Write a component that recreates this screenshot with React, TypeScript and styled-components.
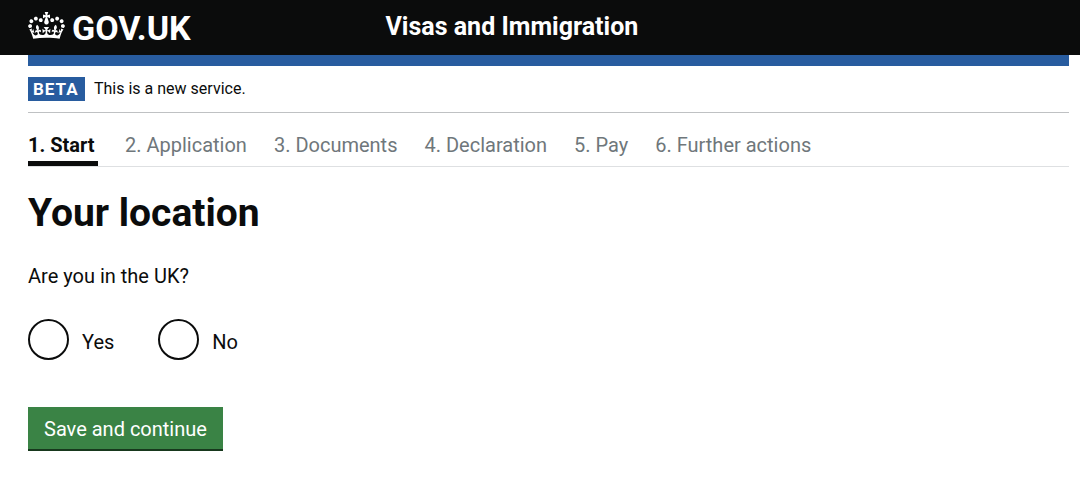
import React from "react";
import styled, { createGlobalStyle } from "styled-components";

const GlobalStyle = createGlobalStyle`
  *, *::before, *::after { box-sizing: border-box; }
  body {
    margin: 0;
    background: #fff;
    color: #0b0c0c;
    font-family: Roboto, "Noto Sans", sans-serif;
    font-size: 20px;
    line-height: 24px;
  }
`;

const Header = styled.header`
  display: flex;
  align-items: center;
  height: 55px;
  padding: 0 11px 0 28px;
  background: #0b0c0c;
  color: #fff;
`;

const LogoColumn = styled.div`
  flex: 0 0 33%;
`;

const LogoLink = styled.a`
  display: inline-flex;
  align-items: center;
  gap: 7px;
  color: inherit;
  font-size: 34px;
  font-weight: 700;
  line-height: 40px;
  text-decoration: none;
`;

const Crown = styled.svg`
  display: block;
  width: 37px;
  height: 27px;
  margin-bottom: 4px;
  fill: currentColor;
`;

const ServiceName = styled.a`
  margin-left: 14px;
  padding-bottom: 2px;
  color: inherit;
  font-size: 25px;
  font-weight: 700;
  line-height: 32px;
  text-decoration: none;
`;

const Page = styled.div`
  margin: 0 11px 0 28px;
`;

const BlueBar = styled.div`
  height: 11px;
  background: #285c9f;
`;

const PhaseBanner = styled.div`
  display: flex;
  align-items: center;
  gap: 9px;
  height: 47px;
  border-bottom: 1px solid #bfc1c3;
  font-size: 16px;
`;

const PhaseTag = styled.strong`
  min-width: 57px;
  padding: 0 5px;
  background: #285c9f;
  color: #fff;
  font-size: 17px;
  font-weight: 700;
  letter-spacing: 1px;
`;

const Steps = styled.ol`
  display: flex;
  gap: 27px;
  margin: 0;
  padding: 20px 0 0;
  border-bottom: 1px solid #dee0e2;
  list-style: none;
`;

const Step = styled.li<{ $current?: boolean }>`
  min-width: ${(p) => (p.$current ? "70px" : "0")};
  padding-bottom: 4px;
  border-bottom: 5px solid ${(p) => (p.$current ? "#0b0c0c" : "transparent")};
  color: ${(p) => (p.$current ? "#0b0c0c" : "#6f777b")};
  font-weight: ${(p) => (p.$current ? 700 : 400)};
`;

const Title = styled.h1`
  margin: 23px 0 0;
  font-size: 39px;
  font-weight: 700;
  line-height: 46px;
`;

const Question = styled.fieldset`
  margin: 28px 0 0;
  padding: 0;
  border: 0;
`;

const Legend = styled.legend`
  padding: 0;
`;

const Options = styled.div`
  display: flex;
  gap: 44px;
  margin-top: 31px;
`;

const Option = styled.label`
  display: flex;
  align-items: center;
  gap: 13px;
  cursor: pointer;
`;

const OptionText = styled.span`
  padding-top: 5px;
`;

const Radio = styled.input`
  width: 41px;
  height: 41px;
  margin: 0;
  appearance: none;
  border: 2px solid #0b0c0c;
  border-radius: 50%;
  background: #fff;

  &:checked {
    background: radial-gradient(#0b0c0c 0 10px, #fff 11px);
  }
`;

const SaveButton = styled.button`
  margin: 47px 0 0;
  padding: 10px 16px 8px;
  border: 0;
  border-bottom: 2px solid #17381d;
  background: #3a8345;
  color: #fff;
  font: inherit;
  cursor: pointer;
`;

const steps = [
  "1. Start",
  "2. Application",
  "3. Documents",
  "4. Declaration",
  "5. Pay",
  "6. Further actions",
];

export default function App() {
  return (
    <>
      <GlobalStyle />
      <Header>
        <LogoColumn>
          <LogoLink href="#">
            <Crown viewBox="0 0 132 97" aria-hidden="true">
              <path d="M25 30.2c3.5 1.5 7.7-.2 9.1-3.7 1.5-3.6-.2-7.8-3.9-9.2-3.6-1.4-7.6.3-9.1 3.9-1.4 3.5.3 7.5 3.9 9zM9 39.5c3.6 1.5 7.8-.2 9.2-3.7 1.5-3.6-.2-7.8-3.9-9.1-3.6-1.5-7.6.2-9.1 3.8-1.4 3.5.3 7.5 3.8 9zM4.4 57.2c3.5 1.5 7.7-.2 9.1-3.8 1.5-3.6-.2-7.7-3.9-9.1-3.5-1.5-7.6.3-9.1 3.8-1.4 3.5.3 7.6 3.9 9.1zm38.3-21.4c3.5 1.5 7.7-.2 9.1-3.8 1.5-3.6-.2-7.7-3.9-9.1-3.6-1.5-7.6.3-9.1 3.8-1.3 3.6.4 7.7 3.9 9.1zm64.4-5.6c-3.6 1.5-7.8-.2-9.1-3.7-1.5-3.6.2-7.8 3.8-9.2 3.6-1.4 7.7.3 9.2 3.9 1.3 3.5-.4 7.5-3.9 9zm15.9 9.3c-3.6 1.5-7.7-.2-9.1-3.7-1.5-3.6.2-7.8 3.7-9.1 3.6-1.5 7.7.2 9.2 3.8 1.5 3.5-.3 7.5-3.8 9zm4.7 17.7c-3.6 1.5-7.8-.2-9.2-3.8-1.5-3.6.2-7.7 3.9-9.1 3.6-1.5 7.7.3 9.2 3.8 1.3 3.5-.4 7.6-3.9 9.1zM89.3 35.8c-3.6 1.5-7.8-.2-9.2-3.8-1.4-3.6.2-7.7 3.9-9.1 3.6-1.5 7.7.3 9.2 3.8 1.4 3.6-.3 7.7-3.9 9.1zM69.7 17.7l8.9 4.7V9.3l-8.9 2.8c-.2-.3-.5-.6-.9-.9L72.4 0H59.6l3.5 11.2c-.3.3-.6.5-.9.9l-8.8-2.8v13.1l8.8-4.7c.3.3.6.7.9.9l-5 15.4v.1c-.2.8-.4 1.6-.4 2.4 0 4.1 3.1 7.5 7 8.1h.2c.3 0 .7.1 1 .1.4 0 .7 0 1-.1h.2c4-.6 7.1-4.1 7.1-8.1 0-.8-.1-1.7-.4-2.4V34l-5.1-15.4c.4-.2.7-.6 1-.9zM66 92.8c16.9 0 32.8 1.1 47.1 3.2 4-16.9 8.9-26.7 14-33.5l-9.6-3.4c1 4.9 1.1 7.2 0 10.2-1.5-1.4-3-4.3-4.2-8.7L108.6 76c2.8-2 5-3.2 7.5-3.3-4.4 9.4-10 11.9-13.6 11.2-4.3-.8-6.3-4.6-5.6-7.9 1-4.7 5.7-5.9 8-.5 4.3-8.7-3-11.4-7.6-8.8 7.1-7.2 7.9-13.5 2.1-21.1-8 6.1-8.1 12.3-4.5 20.8-4.7-5.4-12.1-2.5-9.5 6.2 3.4-5.2 7.9-2 7.2 3.1-.6 4.3-6.4 7.8-13.5 7.2-10.3-.9-10.9-8-11.2-13.8 2.5-.5 7.1 1.8 11 7.3L80.2 60c-4.1 4.4-8 5.3-12.3 5.4 1.4-4.4 8-11.6 8-11.6H55.5s6.4 7.2 7.9 11.6c-4.2-.1-8-1-12.3-5.4l1.4 16.4c3.9-5.5 8.5-7.7 10.9-7.3-.3 5.8-.9 12.8-11.1 13.8-7.2.6-12.9-2.9-13.5-7.2-.7-5 3.8-8.3 7.1-3.1 2.7-8.7-4.6-11.6-9.4-6.2 3.7-8.5 3.6-14.7-4.6-20.8-5.8 7.6-5 13.9 2.2 21.1-4.7-2.6-11.9.1-7.7 8.8 2.3-5.5 7.1-4.2 8.1.5.7 3.3-1.3 7.1-5.7 7.9-3.5.7-9-1.8-13.5-11.2 2.5.1 4.7 1.3 7.5 3.3l-4.7-15.4c-1.2 4.4-2.7 7.2-4.3 8.7-1.1-3-.9-5.3 0-10.2l-9.5 3.4c5 6.9 9.9 16.7 14 33.5 14.8-2.1 30.8-3.2 47.7-3.2z" />
            </Crown>
            GOV.UK
          </LogoLink>
        </LogoColumn>
        <ServiceName href="#">Visas and Immigration</ServiceName>
      </Header>
      <Page>
        <BlueBar />
        <PhaseBanner>
          <PhaseTag>BETA</PhaseTag>
          <span>This is a new service.</span>
        </PhaseBanner>
        <Steps>
          {steps.map((step, i) => (
            <Step key={step} $current={i === 0} aria-current={i === 0 ? "step" : undefined}>
              {step}
            </Step>
          ))}
        </Steps>
        <main>
          <Title>Your location</Title>
          <form onSubmit={(e) => e.preventDefault()}>
            <Question>
              <Legend>Are you in the UK?</Legend>
              <Options>
                <Option>
                  <Radio type="radio" name="inUk" value="yes" />
                  <OptionText>Yes</OptionText>
                </Option>
                <Option>
                  <Radio type="radio" name="inUk" value="no" />
                  <OptionText>No</OptionText>
                </Option>
              </Options>
            </Question>
            <SaveButton type="submit">Save and continue</SaveButton>
          </form>
        </main>
      </Page>
    </>
  );
}
